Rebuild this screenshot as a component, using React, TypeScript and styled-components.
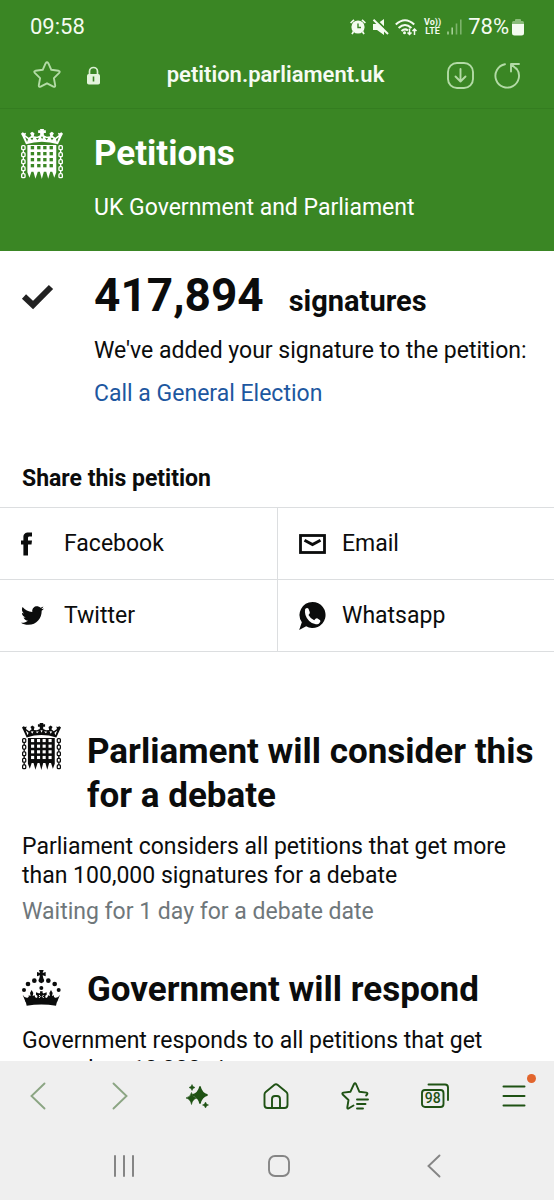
import React from "react";
import styled, { createGlobalStyle } from "styled-components";
import { FaTwitter } from "react-icons/fa";

const GREEN = "#3a8624";
const INK = "#0b0c0c";
const LEAF = "#1f5214";
const PALE = "#b3dba6";
const RULE = "#dcdee0";

const GlobalStyle = createGlobalStyle`
  * { box-sizing: border-box; }
  body { margin: 0; background: #fff; color: ${INK}; font-family: Roboto, "Liberation Sans", sans-serif; }
  h1, h2, h3, p, ul { margin: 0; padding: 0; }
  svg { display: block; flex: none; }
`;

const Page = styled.div`
  display: flex;
  flex-direction: column;
  height: 100vh;
`;

const StatusBar = styled.div`
  display: flex;
  flex: none;
  align-items: center;
  justify-content: space-between;
  height: 42px;
  padding: 12px 30px 0;
  background: ${GREEN};
  color: #f4fbf0;
  font-size: 22px;
  line-height: 30px;
`;

const StatusIcons = styled.div`
  display: flex;
  align-items: center;
  gap: 6px;
`;

const Volte = styled.span`
  font-size: 9px;
  font-weight: 700;
  line-height: 9px;
  text-align: center;
  white-space: nowrap;
`;

const Charge = styled.span`
  display: flex;
  align-items: center;
  gap: 3px;
`;

const AddressBar = styled.div`
  display: flex;
  flex: none;
  align-items: center;
  justify-content: space-between;
  height: 67px;
  padding: 0 33px;
  background: ${GREEN};
  border-bottom: 1px solid #347d20;
  color: ${PALE};
`;

const AddressGroup = styled.div`
  display: flex;
  align-items: center;
  gap: 20px;
`;

const IconButton = styled.button`
  display: flex;
  align-items: center;
  justify-content: center;
  padding: 0;
  border: 0;
  background: none;
  color: inherit;
`;

const Address = styled.div`
  color: #f6fbf3;
  font-size: 22px;
  font-weight: 600;
  line-height: 28px;
`;

const Content = styled.main`
  flex: 1;
  min-height: 0;
  overflow: hidden;
`;

const Banner = styled.header`
  display: flex;
  gap: 31px;
  height: 142px;
  padding: 20px 21px 0;
  background: ${GREEN};
  color: #fff;
`;

const SiteTitle = styled.h1`
  padding-top: 3px;
  font-size: 35px;
  font-weight: 700;
  line-height: 44px;
`;

const SiteSubtitle = styled.p`
  margin-top: 18px;
  font-size: 23px;
  line-height: 28px;
`;

const Confirmation = styled.section`
  display: flex;
  gap: 40px;
  padding: 15px 21px 0;
`;

const TickSlot = styled.div`
  padding-top: 18px;
`;

const Count = styled.h2`
  display: flex;
  align-items: baseline;
  gap: 25px;
  margin-bottom: 6px;
  font-size: 29px;
  font-weight: 700;
  line-height: 58px;
`;

const CountNumber = styled.span`
  font-size: 46px;
`;

const Text = styled.p<{ $muted?: boolean }>`
  font-size: 23px;
  line-height: 29px;
  color: ${(p) => (p.$muted ? "#6f777b" : INK)};
`;

const PetitionLink = styled.a`
  display: inline-block;
  margin-top: 14px;
  color: #1d57a0;
  font-size: 23px;
  line-height: 29px;
  text-decoration: none;
`;

const ShareTitle = styled.h3`
  padding: 56px 22px 14px;
  font-size: 23px;
  font-weight: 700;
  line-height: 29px;
`;

const ShareList = styled.ul`
  display: grid;
  grid-template-columns: 1fr 1fr;
  list-style: none;
  border-top: 1px solid ${RULE};
`;

const ShareItem = styled.li`
  border-bottom: 1px solid ${RULE};
  &:nth-child(even) { border-left: 1px solid ${RULE}; }
`;

const ShareLink = styled.a`
  display: flex;
  align-items: center;
  height: 71px;
  padding-left: 21px;
  color: ${INK};
  font-size: 23px;
  text-decoration: none;
`;

const ShareIcon = styled.span`
  width: 43px;
`;

const Stages = styled.div`
  display: flex;
  flex-direction: column;
  gap: 35px;
  padding-top: 71px;
`;

const Stage = styled.section`
  padding: 0 16px 0 22px;
`;

const StageHead = styled.div`
  display: flex;
  gap: 26px;
  margin-bottom: 14px;
`;

const StageTitle = styled.h2`
  padding-top: 7px;
  font-size: 35px;
  font-weight: 700;
  line-height: 44px;
`;

const Details = styled.div`
  display: flex;
  flex-direction: column;
  gap: 7px;
`;

const BottomBar = styled.footer`
  flex: none;
  background: #efefef;
`;

const ToolRow = styled.nav`
  display: flex;
  align-items: center;
  justify-content: space-between;
  height: 70px;
  padding: 0 20px 0 18px;
  color: ${LEAF};
`;

const ToolButton = styled(IconButton)<{ $faded?: boolean }>`
  position: relative;
  width: 40px;
  height: 40px;
  color: ${(p) => (p.$faded ? "#8ba583" : LEAF)};
`;

const Badge = styled.span`
  position: absolute;
  top: -2px;
  right: -2px;
  width: 9px;
  height: 9px;
  border-radius: 50%;
  background: #e2652d;
`;

const SystemRow = styled.nav`
  display: flex;
  align-items: center;
  justify-content: center;
  gap: 115px;
  height: 69px;
  padding-left: 4px;
  color: #858585;
`;

const SystemButton = styled(IconButton)`
  width: 40px;
  height: 40px;
`;

const BAR_GAPS = [34, 53, 71, 90];

function Portcullis({ width, height, color, back }: { width: number; height: number; color: string; back: string }) {
  return (
    <svg width={width} height={height} viewBox="0 0 125 150" preserveAspectRatio="none" aria-hidden="true">
      <g fill={color}>
        <path d="M19 48H105V130L99 146L93 128H87L81 149L75 128H68L62 150L56 128H50L43 149L37 128H31L25 146L19 130Z" />
        <path d="M15 46L4 22L0 14L5 10L10 13L15 11L13 19L23 26L31 20L27 13L33 8L40 13L38 22L48 23L57 19V12H51V4H58L56 0H69L67 4H74V12H68V19L77 23L87 22L85 13L92 8L98 13L94 20L102 26L112 19L110 11L115 13L120 10L125 14L121 22L110 46Q62 31 15 46Z" />
      </g>
      <g fill={back}>
        {[51, 69, 87, 105].map((y) => BAR_GAPS.map((x) => <rect key={`${x}-${y}`} x={x - 5} y={y} width="10" height="10" />))}
        <path d="M12 24l9 7-3 8zM113 24l-9 7 3 8zM28 27l9-1-4 8zM97 27l-9-1 4 8zM44 28l10-2-5 7zM81 28l-10-2 5 7zM59 23h7l-3 8z" />
      </g>
      <g fill="none" stroke={color} strokeWidth="4">
        {[7, 118].map((x) => (
          <g key={x}>
            {[50, 71, 92, 113, 134].map((y) => (
              <rect key={y} x={x - 5} y={y} width="10" height="12" rx="3" />
            ))}
            <path d={`M${x} 62v9M${x} 83v9M${x} 104v9M${x} 125v9`} />
          </g>
        ))}
      </g>
    </svg>
  );
}

function Crown() {
  return (
    <svg width="39" height="47" viewBox="0 0 117 141" fill={INK} aria-hidden="true">
      <g transform="translate(0 27)">
        <path d="M51 0h14l-3 9 9-3v13l-9-3 2 9q5 6 1 11l-7 4-7-4q-4-5 1-11l2-9-9 3V6l9 3z" />
        <circle cx="37" cy="32" r="7" />
        <circle cx="79" cy="32" r="7" />
        <circle cx="18" cy="42" r="7" />
        <circle cx="98" cy="42" r="7" />
        <circle cx="6" cy="60" r="6" />
        <circle cx="110" cy="60" r="6" />
        <circle cx="58" cy="54" r="6" />
        <path d="M10 90Q58 80 106 90L102 107Q58 100 14 107Z" />
        <path d="M2 74Q8 85 17 83Q22 81 20 76L26 78L24 69L29 60L34 69L32 78L38 76Q38 84 43 84Q48 82 46 77L42 74V67L50 70Q56 72 54 64H62Q60 72 66 70L74 67V74L70 77Q68 82 73 84Q78 84 78 76L84 78L82 69L87 60L92 69L90 78L96 76Q94 81 99 83Q108 85 114 74L105 97H11Z" />
        <path d="M51 75l4 4-4 5M65 75l-4 4 4 5" fill="none" stroke="#fff" strokeWidth="3" />
      </g>
    </svg>
  );
}

function FacebookIcon() {
  return (
    <svg width="11" height="24" viewBox="0 0 11 24" aria-hidden="true">
      <path d="M2.400 23.500V12.400H0V8.600h2.400V5.400C2.400 2 4.400.6 7.400.6H11v4H8.700C7.300 4.600 7 5.200 7 6.200v2.400h4l-.5 3.800H7v11.100z" fill={INK} />
    </svg>
  );
}

function MailIcon() {
  return (
    <svg width="27" height="20" viewBox="0 0 27 20" fill="none" stroke={INK} aria-hidden="true">
      <rect x="1.500" y="1.500" width="24" height="17" strokeWidth="2.800" />
      <path d="M5.500 6.200l8 4.400 8-4.400" strokeWidth="3" />
    </svg>
  );
}

function WhatsappIcon() {
  return (
    <svg width="27" height="28" viewBox="0 0 80 84" aria-hidden="true">
      <path d="M40 0a39 39 0 1 1-19 73L0 84l8-23A39 39 0 0 1 40 0z" fill={INK} />
      <path d="M18 21q6-6 10-1l4 11q1 4-4 8 6 11 17 16 5-7 9-6l9 6q3 4-4 10-15 6-29-8-16-16-12-36z" fill="#fff" />
    </svg>
  );
}

const shares = [
  { name: "Facebook", icon: <FacebookIcon /> },
  { name: "Email", icon: <MailIcon /> },
  { name: "Twitter", icon: <FaTwitter size={23} /> },
  { name: "Whatsapp", icon: <WhatsappIcon /> },
];

function AlarmIcon() {
  return (
    <svg width="16" height="16" viewBox="0 0 16 16" fill="none" stroke="currentColor" aria-hidden="true">
      <circle cx="8" cy="8" r="6.600" fill="currentColor" stroke="none" />
      <path d="M.6 4L4 .8M15.400 4L12 .8M3.500 12.500L2 15.200M12.500 12.500L14 15.200" strokeWidth="1.700" />
      <path d="M8 4.500V8.500H11" stroke={GREEN} strokeWidth="1.400" />
    </svg>
  );
}

function MuteIcon() {
  return (
    <svg width="17" height="16" viewBox="0 0 17 16" aria-hidden="true">
      <path d="M1 5h4l7-5v16l-7-5H1z" fill="currentColor" />
      <path d="M3 0L17 13.500" stroke={GREEN} strokeWidth="2" />
      <path d="M1.500.8L16 15" stroke="currentColor" strokeWidth="2" />
    </svg>
  );
}

function WifiIcon() {
  return (
    <svg width="23" height="17" viewBox="0 0 23 17" fill="none" stroke="currentColor" strokeWidth="2.100" aria-hidden="true">
      <path d="M.8 5.500Q10 -3 19.200 5.500M3.600 9Q10 3 16.400 9M6.500 12Q10 9 13 11.500" />
      <circle cx="9.500" cy="13.800" r="1.500" fill="currentColor" stroke="none" />
      <path d="M14.500 9.500v6M12.500 13.500l2 2 2-2M19.500 16v-6M17.500 12l2-2 2 2" strokeWidth="1.500" />
    </svg>
  );
}

function SignalIcon() {
  return (
    <svg width="15" height="16" viewBox="0 0 15 16" stroke="#7db36c" strokeWidth="1.600" aria-hidden="true">
      <path d="M1 12.500V15.500M5.200 8.500V15.500" stroke="#a5d096" />
      <path d="M9.500 4.500V15.500M13.800.500V15.500" />
    </svg>
  );
}

function BatteryIcon() {
  return (
    <svg width="12" height="17" viewBox="0 0 12 17" aria-hidden="true">
      <path d="M3 1q0-1 1-1h4q1 0 1 1v1h1.500Q12 2 12 4v2H0V4q0-2 1.500-2H3z" fill="#8abc7a" />
      <path d="M0 5h12v9q0 2.500-2.500 2.500h-7Q0 16.500 0 14z" fill="currentColor" />
    </svg>
  );
}

export default function App() {
  return (
    <Page>
      <GlobalStyle />
      <StatusBar>
        <span>09:58</span>
        <StatusIcons>
          <AlarmIcon />
          <MuteIcon />
          <WifiIcon />
          <Volte>Vo))<br />LTE</Volte>
          <SignalIcon />
          <Charge>78%<BatteryIcon /></Charge>
        </StatusIcons>
      </StatusBar>
      <AddressBar>
        <AddressGroup>
          <IconButton aria-label="Bookmark page">
            <svg width="28" height="28" viewBox="0 0 28 28" fill="none" stroke="currentColor" strokeWidth="1.900" strokeLinejoin="round">
              <path d="M12.700 2.200q1.300-2 2.600 0l3 6.600 7.300 1q1.900.5.600 2.100l-5.300 5.200 1.300 7.300q0 2-1.800 1.300L14 22.300l-6.400 3.400q-1.800.7-1.800-1.300l1.300-7.300-5.300-5.200q-1.300-1.600.6-2.100l7.300-1z" />
            </svg>
          </IconButton>
          <IconButton aria-label="Site security">
            <svg width="23" height="19" viewBox="0 0 23 19">
              <path d="M8.500 9V5.500a4 4 0 0 1 8 0V9" fill="none" stroke="#d9efd1" strokeWidth="1.700" />
              <rect x="6" y="8" width="13" height="10.500" rx="1.800" fill="#e3f4dc" />
              <path d="M12.500 10.500v5" stroke={GREEN} strokeWidth="1.600" />
            </svg>
          </IconButton>
        </AddressGroup>
        <Address>petition.parliament.uk</Address>
        <AddressGroup>
          <IconButton aria-label="Downloads">
            <svg width="27" height="27" viewBox="0 0 27 27" fill="none" stroke="currentColor" strokeWidth="1.900" strokeLinecap="round" strokeLinejoin="round">
              <rect x="1" y="1" width="25" height="25" rx="9" />
              <path d="M13.500 7v12.500M8.500 14.500l5 5 5-5" />
            </svg>
          </IconButton>
          <IconButton aria-label="Reload">
            <svg width="27" height="27" viewBox="0 0 27 27" fill="none" stroke="currentColor" strokeWidth="1.900" strokeLinecap="round" strokeLinejoin="round">
              <path d="M11 2.200A11.800 11.800 0 1 0 22.500 6.500M25 2H17v7.500M17.500 2.500l5 4.500" />
            </svg>
          </IconButton>
        </AddressGroup>
      </AddressBar>
      <Content>
        <Banner>
          <Portcullis width={42} height={50} color="#fff" back={GREEN} />
          <div>
            <SiteTitle>Petitions</SiteTitle>
            <SiteSubtitle>UK Government and Parliament</SiteSubtitle>
          </div>
        </Banner>
        <Confirmation>
          <TickSlot>
            <svg width="33" height="26" viewBox="0 0 33 26" aria-hidden="true">
              <path d="M3 12.500l9 8.500L30 3" fill="none" stroke="#222" strokeWidth="6" />
            </svg>
          </TickSlot>
          <div>
            <Count><CountNumber>417,894</CountNumber> signatures</Count>
            <Text>We've added your signature to the petition:</Text>
            <PetitionLink href="#petition">Call a General Election</PetitionLink>
          </div>
        </Confirmation>
        <ShareTitle>Share this petition</ShareTitle>
        <ShareList>
          {shares.map((s) => (
            <ShareItem key={s.name}>
              <ShareLink href="#share"><ShareIcon>{s.icon}</ShareIcon>{s.name}</ShareLink>
            </ShareItem>
          ))}
        </ShareList>
        <Stages>
          <Stage>
            <StageHead>
              <Portcullis width={39} height={47} color={INK} back="#fff" />
              <StageTitle>Parliament will consider this for a debate</StageTitle>
            </StageHead>
            <Details>
              <Text>Parliament considers all petitions that get more than 100,000 signatures for a debate</Text>
              <Text $muted>Waiting for 1 day for a debate date</Text>
            </Details>
          </Stage>
          <Stage>
            <StageHead>
              <Crown />
              <StageTitle>Government will respond</StageTitle>
            </StageHead>
            <Text>Government responds to all petitions that get more than 10,000 signatures</Text>
          </Stage>
        </Stages>
      </Content>
      <BottomBar>
        <ToolRow aria-label="Browser">
          <ToolButton $faded aria-label="Back">
            <svg width="16" height="28" viewBox="0 0 16 28" fill="none" stroke="currentColor" strokeWidth="1.900" strokeLinecap="round"><path d="M14.500 1.500L1.500 14l13 12.500" /></svg>
          </ToolButton>
          <ToolButton $faded aria-label="Forward">
            <svg width="22" height="28" viewBox="0 0 22 28" fill="none" stroke="currentColor" strokeWidth="1.900" strokeLinecap="round"><path d="M7.500 1.500L20.500 14l-13 12.500" /></svg>
          </ToolButton>
          <ToolButton aria-label="Assist">
            <svg width="24" height="24" viewBox="0 0 24 24" fill="currentColor">
              <path d="M15 2.500q1.500 7 7.500 8.500-6 1.500-7.500 8.500-1.500-7-7.500-8.500 6-1.500 7.500-8.500z" stroke="currentColor" strokeWidth="1.400" />
              <path d="M6.500 8.500q1 4.500 5.500 5.500-4.500 1-5.500 6.500Q5.500 15 1 14q4.500-1 5.500-5.500z" stroke="currentColor" strokeWidth=".6" />
              <path d="M7 .5l1 2 2 1-2 1-1 2-1-2-2-1 2-1zM20.500 18l1 2 2 1-2 1-1 2-1-2-2-1 2-1z" stroke="currentColor" strokeWidth=".5" />
            </svg>
          </ToolButton>
          <ToolButton aria-label="Home">
            <svg width="26" height="26" viewBox="0 0 26 26" fill="none" stroke="currentColor" strokeWidth="1.900" strokeLinejoin="round">
              <path d="M1.500 11.500q0-1.500 1.200-2.500l8.800-7.200q1.500-1.200 3 0L23.300 9q1.200 1 1.200 2.500V22q0 3-3 3h-17q-3 0-3-3z" />
              <path d="M9 25v-9q0-3 3-3h2q3 0 3 3v9" />
            </svg>
          </ToolButton>
          <ToolButton aria-label="Bookmarks">
            <svg width="28" height="28" viewBox="0 0 28 28" fill="none" stroke="currentColor" strokeWidth="1.900" strokeLinecap="round" strokeLinejoin="round">
              <path d="M12.500 23.500l-5 3q-1.300.5-1.200-1L7.500 18 1.700 12.500q-1-1.500.6-1.900l7.200-.9L13 2q1-1.500 2 0l3.300 7.700 7.200.9q1.500.4.600 1.900l-1 1" />
              <path d="M16 17.500h11M16 22h8.500M16 26.500h6" />
            </svg>
          </ToolButton>
          <ToolButton aria-label="98 open tabs">
            <svg width="28" height="26" viewBox="0 0 28 26" fill="none" stroke="currentColor" strokeWidth="1.900" strokeLinecap="round">
              <rect x="1" y="7" width="21.500" height="17" rx="3" />
              <path d="M7.500 1.500H24q3 0 3 3V17" />
              <text x="11.700" y="20.300" fill="currentColor" stroke="none" fontFamily="Roboto, sans-serif" fontSize="14" fontWeight="500" textAnchor="middle">98</text>
            </svg>
          </ToolButton>
          <ToolButton aria-label="Menu">
            <svg width="24" height="24" viewBox="0 0 24 24" stroke="currentColor" strokeWidth="2" strokeLinecap="round"><path d="M1.500 2.500h21M1.500 12h21M1.500 21.500h21" /></svg>
            <Badge />
          </ToolButton>
        </ToolRow>
        <SystemRow aria-label="System">
          <SystemButton aria-label="Recent apps">
            <svg width="22" height="24" viewBox="0 0 22 24" stroke="currentColor" strokeWidth="2" strokeLinecap="round"><path d="M2 2v20M11 2v20M20 2v20" /></svg>
          </SystemButton>
          <SystemButton aria-label="Home screen">
            <svg width="24" height="24" viewBox="0 0 24 24" fill="none" stroke="currentColor" strokeWidth="1.900"><rect x="2" y="2" width="20" height="20" rx="6" /></svg>
          </SystemButton>
          <SystemButton aria-label="Go back">
            <svg width="14" height="24" viewBox="0 0 14 24" fill="none" stroke="currentColor" strokeWidth="1.900" strokeLinecap="round"><path d="M12.500 1.500L1.500 12l11 10.500" /></svg>
          </SystemButton>
        </SystemRow>
      </BottomBar>
    </Page>
  );
}
